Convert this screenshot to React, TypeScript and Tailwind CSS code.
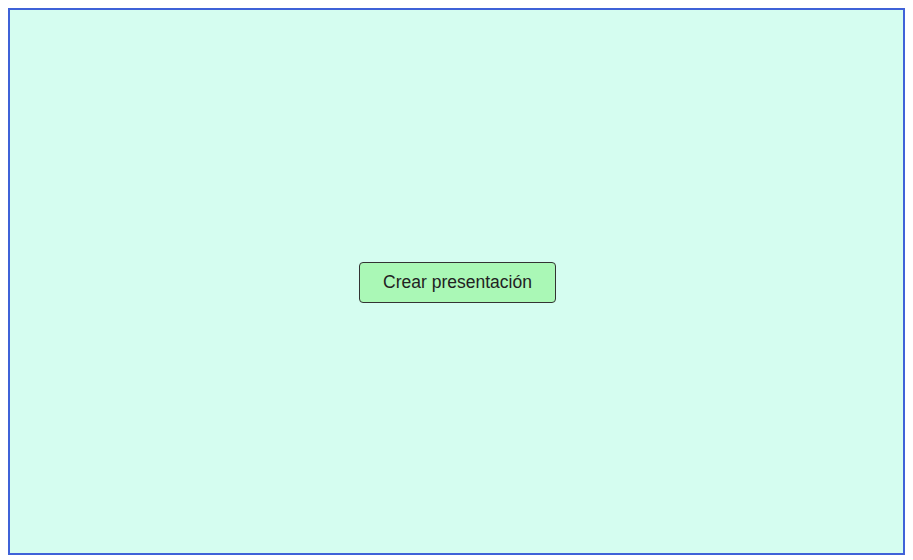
export default function App() {
  return (
    <div className="w-[913px] h-[560px] bg-white p-2 font-['Liberation_Sans',Arial,sans-serif]">
      <div className="w-[897px] h-[547px] border-2 border-[#3f62d8] bg-[#d5fdf0] flex items-center justify-center">
        <button className="ml-[2px] mt-[2px] w-[197px] h-[41px] bg-[#aaf8b6] border border-[#333] rounded text-[17.5px] text-[#222]">
          Crear presentación
        </button>
      </div>
    </div>
  );
}
